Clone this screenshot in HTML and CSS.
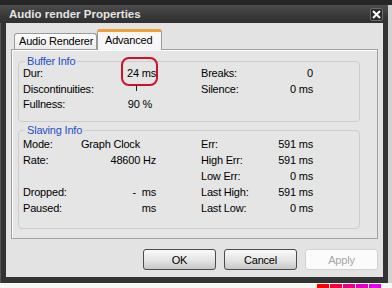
FILE: index.html
```html
<!DOCTYPE html>
<html lang="en">
<head>
    <meta charset="UTF-8">
    <title>Audio render Properties</title>
    <link rel="stylesheet" href="styles.css">
</head>
<body>
    <div class="backdrop"></div>
    <div class="main-row">
        <div class="window">
            <div class="titlebar">
                <span class="title">Audio render Properties</span>
                <span class="close">
                    <svg width="9" height="9" viewBox="0 0 9 9"><path d="M1 1L8 8M8 1L1 8" stroke="#fff" stroke-width="2"/></svg>
                </span>
            </div>
            <div class="client">
                <div class="tabs">
                    <div class="tab">Audio Renderer</div>
                    <div class="tab active">Advanced</div>
                </div>
                <div class="panel">
                    <div class="group buffer">
                        <span class="group-title">Buffer Info</span>
                        <div class="grid">
                            <span>Dur:</span>
                            <span class="val mark-cell">24 ms<i class="ring"></i></span>
                            <span></span>
                            <span>Breaks:</span>
                            <span class="val">0</span>

                            <span>Discontinuities:</span>
                            <span class="val mark-cell"><i class="tick"></i></span>
                            <span></span>
                            <span>Silence:</span>
                            <span class="val">0 ms</span>

                            <span>Fullness:</span>
                            <span class="val pct">90 %</span>
                            <span></span>
                            <span></span>
                            <span></span>
                        </div>
                    </div>
                    <div class="group slaving">
                        <span class="group-title">Slaving Info</span>
                        <div class="grid">
                            <span>Mode:</span>
                            <span class="left">Graph Clock</span>
                            <span></span>
                            <span>Err:</span>
                            <span class="val">591 ms</span>

                            <span>Rate:</span>
                            <span class="val">48600 Hz</span>
                            <span></span>
                            <span>High Err:</span>
                            <span class="val">591 ms</span>

                            <span></span>
                            <span></span>
                            <span></span>
                            <span>Low Err:</span>
                            <span class="val">0 ms</span>

                            <span>Dropped:</span>
                            <span class="val">-&nbsp; ms</span>
                            <span></span>
                            <span>Last High:</span>
                            <span class="val">591 ms</span>

                            <span>Paused:</span>
                            <span class="val">ms</span>
                            <span></span>
                            <span>Last Low:</span>
                            <span class="val">0 ms</span>
                        </div>
                    </div>
                </div>
                <div class="buttons">
                    <button>OK</button>
                    <button>Cancel</button>
                    <button class="disabled">Apply</button>
                </div>
            </div>
        </div>
        <div class="side"></div>
    </div>
    <div class="taskbar">
        <span class="swatch" style="background:#ff0000"></span>
        <span class="swatch" style="background:#f5003c"></span>
        <span class="swatch" style="background:#ee0080"></span>
        <span class="swatch" style="background:#e600bc"></span>
        <span class="swatch" style="background:#e200ee"></span>
    </div>
</body>
</html>
```

FILE: styles.css
```css
body {
    margin: 0;
    width: 392px;
    height: 288px;
    overflow: hidden;
    background-color: #f3faf3;
    font-family: "Liberation Sans", Arial, sans-serif;
    font-size: 11px;
    color: #000;
}
.backdrop {
    height: 5px;
    background-color: #262626;
}
.main-row {
    display: flex;
}
.window {
    width: 388px;
    height: 278px;
    background-color: #333;
    box-shadow: inset 1px 0 0 #555;
    display: flex;
    flex-direction: column;
}
.titlebar {
    height: 18px;
    display: flex;
    align-items: center;
    justify-content: space-between;
    padding: 0 5px 0 9px;
    background: linear-gradient(#4d4d4d, #383838 60%, #303030);
}
.title {
    color: #e4e4e4;
    font-weight: bold;
    font-size: 11.5px;
}
.close {
    width: 11px;
    height: 11px;
    border: 1px solid #6a6a6a;
    border-radius: 2px;
    background-color: #2a2a2a;
    display: flex;
    align-items: center;
    justify-content: center;
}
.client {
    height: 254px;
    margin: 0 5px 0 6px;
    background-color: #e3e3e3;
    letter-spacing: -0.2px;
}
.tabs {
    display: flex;
    align-items: flex-end;
    height: 20px;
    margin: 6px 0 0 8px;
}
.tab {
    box-sizing: border-box;
    width: 83px;
    height: 16px;
    line-height: 15px;
    padding-left: 4px;
    border: 1px solid #9a9a9a;
    border-bottom: none;
    border-radius: 3px 3px 0 0;
    background: linear-gradient(#fdfdfd, #ececec);
}
.tab.active {
    width: 65px;
    height: 21px;
    margin-bottom: -1px;
    padding-left: 7px;
    line-height: 17px;
    border-top: 3px solid #f0a030;
    background: #f7f7f7;
    position: relative;
    z-index: 1;
}
.panel {
    box-sizing: border-box;
    width: 367px;
    height: 190px;
    margin-left: 5px;
    padding: 11px 0 0 6px;
    border: 1px solid #a2a2a2;
    box-shadow: inset 1px 1px 0 #fff;
    background-color: #e5e5e5;
}
.group {
    position: relative;
    box-sizing: border-box;
    width: 342px;
    border: 1px solid #cdcdcd;
    border-radius: 4px;
    padding-left: 4px;
}
.buffer {
    height: 61px;
    padding-top: 4px;
}
.slaving {
    height: 99px;
    margin-top: 8px;
    padding-top: 5px;
}
/* title sits on top of the group border */
.group-title {
    position: absolute;
    top: -8px;
    left: 6px;
    padding: 0 2px;
    line-height: 14px;
    color: #1c4fc8;
    background-color: #e5e5e5;
}
.grid {
    display: grid;
    grid-template-columns: 58px 75px 45px 60px 52px;
    grid-auto-rows: 16px;
    line-height: 16px;
    white-space: nowrap;
}
.buffer .grid {
    grid-template-rows: 16px 15px 15px;
    line-height: 15px;
}
.val {
    text-align: right;
}
.pct {
    padding-right: 4px;
}
.left {
    text-align: left;
}
.mark-cell {
    position: relative;
}
/* red annotation ring around the value */
.ring {
    position: absolute;
    left: 40px;
    top: -9px;
    width: 33px;
    height: 25px;
    border: 2px solid #d0102e;
    border-radius: 8px;
}
.tick {
    position: absolute;
    left: 55px;
    top: 3px;
    width: 1px;
    height: 6px;
    background-color: #222;
}
.buttons {
    display: flex;
    justify-content: flex-end;
    gap: 8px;
    margin: 10px 5px 0 0;
}
button {
    width: 73px;
    height: 21px;
    padding: 0;
    font-family: "Liberation Sans", Arial, sans-serif;
    font-size: 11px;
    letter-spacing: -0.2px;
    color: #000;
    border: 1px solid #4c4c4c;
    border-radius: 3px;
    background: linear-gradient(#fafafa, #e6e6e6 50%, #c8c8c8);
}
button.disabled {
    color: #a6a6a6;
    border-color: #d2d2d2;
    background: #fbfbfb;
}
.side {
    width: 4px;
    background-color: #d2d2d2;
}
.taskbar {
    display: flex;
    gap: 1px;
    height: 5px;
    padding: 1px 0 0 317px;
}
.swatch {
    width: 12px;
    height: 4px;
}
```
